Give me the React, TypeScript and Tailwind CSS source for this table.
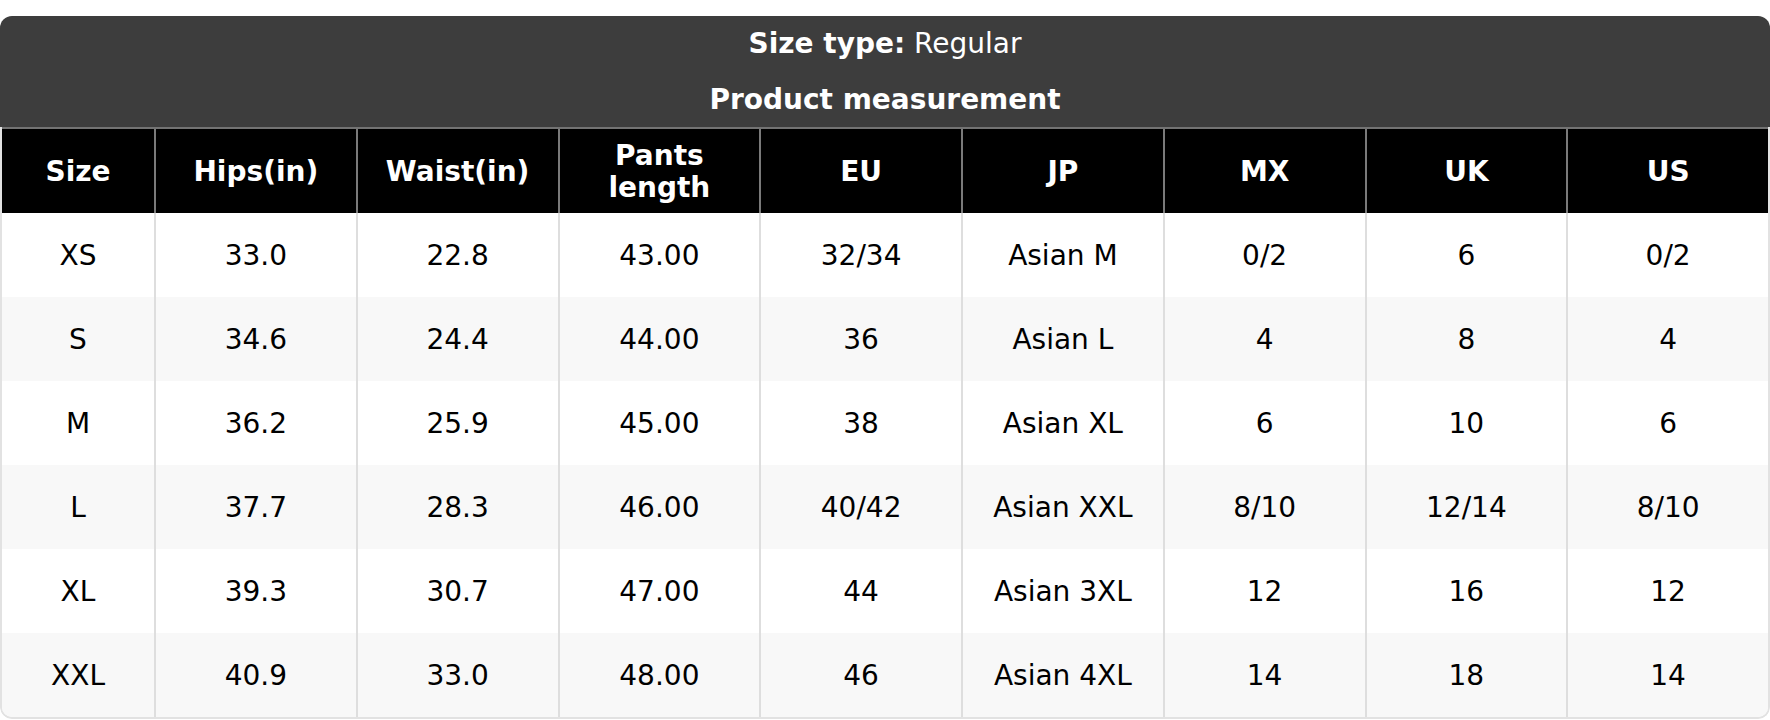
import React from "react";

const cols = ["Size", "Hips(in)", "Waist(in)", "Pants length", "EU", "JP", "MX", "UK", "US"];

const rows: string[][] = [
  ["XS", "33.0", "22.8", "43.00", "32/34", "Asian M", "0/2", "6", "0/2"],
  ["S", "34.6", "24.4", "44.00", "36", "Asian L", "4", "8", "4"],
  ["M", "36.2", "25.9", "45.00", "38", "Asian XL", "6", "10", "6"],
  ["L", "37.7", "28.3", "46.00", "40/42", "Asian XXL", "8/10", "12/14", "8/10"],
  ["XL", "39.3", "30.7", "47.00", "44", "Asian 3XL", "12", "16", "12"],
  ["XXL", "40.9", "33.0", "48.00", "46", "Asian 4XL", "14", "18", "14"],
];

export default function App() {
  return (
    <div className="bg-white pt-[16px] w-[1770px]" style={{ fontFamily: '"DejaVu Sans", Verdana, sans-serif' }}>
      <div className="rounded-[12px] overflow-hidden w-[1770px]">
        <div className="bg-[#3d3d3d] text-white text-center text-[28px]">
          <div className="h-[54px] leading-[56px]">
            <span className="font-bold">Size type:</span> Regular
          </div>
          <div className="h-[57px] leading-[60px] font-bold">Product measurement</div>
        </div>
        <div className="rounded-b-[12px] overflow-hidden border-x-2 border-b-2 border-[#e2e2e2]">
          <div className="grid grid-cols-[152px_repeat(8,minmax(0,1fr))] border-t-2 border-[#737373]">
            {cols.map((c, i) => (
              <div
                key={c}
                className={`h-[84px] pt-[2px] bg-black text-white font-bold text-[28px] leading-[32px] flex items-center justify-center text-center ${
                  i > 0 ? "border-l-2 border-[#7a7a7a]" : ""
                }`}
              >
                {c === "Pants length" ? (
                  <span>
                    Pants
                    <br />
                    length
                  </span>
                ) : (
                  c
                )}
              </div>
            ))}
            {rows.map((r, ri) =>
              r.map((v, ci) => (
                <div
                  key={`${ri}-${ci}`}
                  className={`h-[84px] pt-[2px] text-black text-[28px] leading-[32px] flex items-center justify-center ${
                    ri % 2 === 1 ? "bg-[#f8f8f8]" : "bg-white"
                  } ${ci > 0 ? "border-l-2 border-[#dedede]" : ""}`}
                >
                  {v}
                </div>
              ))
            )}
          </div>
        </div>
      </div>
    </div>
  );
}
